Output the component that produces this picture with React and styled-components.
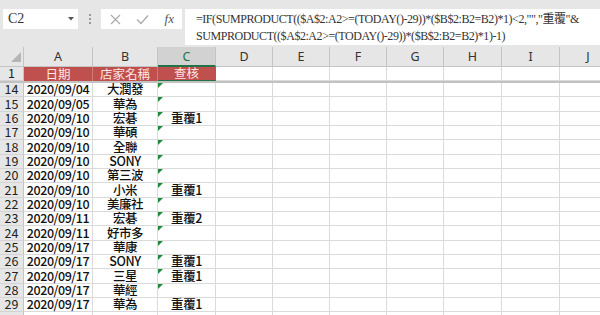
import React from "react";
import styled, { createGlobalStyle, css } from "styled-components";

const COLS = "24px 69px 65px 58px 57px 57px 57px 57px 58px 58px 57px";
const letters = ["A", "B", "C", "D", "E", "F", "G", "H", "I", "J"];

const rows = [
  [14, "2020/09/04", "大潤發", "", true],
  [15, "2020/09/05", "華為", "", true],
  [16, "2020/09/10", "宏碁", "重覆1", true],
  [17, "2020/09/10", "華碩", "", true],
  [18, "2020/09/10", "全聯", "", true],
  [19, "2020/09/10", "SONY", "", true],
  [20, "2020/09/10", "第三波", "", true],
  [21, "2020/09/10", "小米", "重覆1", true],
  [22, "2020/09/10", "美廉社", "", true],
  [23, "2020/09/11", "宏碁", "重覆2", true],
  [24, "2020/09/11", "好市多", "", true],
  [25, "2020/09/17", "華康", "", true],
  [26, "2020/09/17", "SONY", "重覆1", true],
  [27, "2020/09/17", "三星", "重覆1", true],
  [28, "2020/09/17", "華經", "", true],
  [29, "2020/09/17", "華為", "重覆1", false],
  [30, "", "", "", false],
];

function App() {
  return (
    <Page>
      <Global />
      <TopBar>
        <NameBox>
          <span>C2</span>
          <svg width="6" height="4" viewBox="0 0 6 4">
            <path d="M0 0h6L3 3.5z" fill="#555" />
          </svg>
        </NameBox>
        <Grip>
          <i />
          <i />
          <i />
        </Grip>
        <FxBox>
          <svg width="11" height="11" viewBox="0 0 11 11">
            <path d="M1 1l9 9M10 1l-9 9" stroke="#a8a8a8" strokeWidth="1.1" />
          </svg>
          <svg width="13" height="11" viewBox="0 0 13 11">
            <path d="M1 5.5l4 4L12 1.5" stroke="#a8a8a8" strokeWidth="1.2" fill="none" />
          </svg>
          <Fx>fx</Fx>
        </FxBox>
        <FormulaBar>
          =IF(SUMPRODUCT(($A$2:A2&gt;=(TODAY()-29))*($B$2:B2=B2)*1)&lt;2,"","重覆"&amp;
          <br />
          SUMPRODUCT(($A$2:A2&gt;=(TODAY()-29))*($B$2:B2=B2)*1)-1)
        </FormulaBar>
      </TopBar>

      <Sheet>
        <Row $h={20}>
          <Corner>
            <svg width="10" height="10" viewBox="0 0 10 10">
              <path d="M10 0v10H0z" fill="#b5b5b5" />
            </svg>
          </Corner>
          {letters.map((l) => (
            <ColHead key={l} $active={l === "C"}>
              {l}
            </ColHead>
          ))}
        </Row>

        <Row $h={16} $frozen>
          <RowHead>1</RowHead>
          <HeadCell>日期</HeadCell>
          <HeadCell>店家名稱</HeadCell>
          <HeadCell $active>查核</HeadCell>
          {letters.slice(3).map((l) => (
            <Cell key={l} />
          ))}
        </Row>

        {rows.map(([n, date, shop, check, flag]) => (
          <Row key={n} $h={14.33}>
            <RowHead>{n}</RowHead>
            <Cell>{date}</Cell>
            <Cell>{shop}</Cell>
            <Cell $flag={flag}>{check}</Cell>
            {letters.slice(3).map((l) => (
              <Cell key={l} />
            ))}
          </Row>
        ))}
      </Sheet>
    </Page>
  );
}

export default App;

const Global = createGlobalStyle`
  html, body {
    margin: 0;
    padding: 0;
    background: #ffffff;
    overflow: hidden;
  }
`;

const Page = styled.div`
  width: 600px;
  height: 315px;
  overflow: hidden;
  background: #ffffff;
  font-family: "Noto Sans CJK TC", "Noto Sans", sans-serif;
`;

const TopBar = styled.div`
  display: flex;
  align-items: flex-start;
  height: 47px;
  padding: 9px 0 0 3px;
  box-sizing: border-box;
  background: #e6e6e6;
`;

const NameBox = styled.div`
  display: flex;
  align-items: center;
  justify-content: space-between;
  width: 75px;
  height: 20px;
  padding: 0 4px 0 5px;
  box-sizing: border-box;
  background: #ffffff;
  font-family: "Liberation Serif", serif;
  font-size: 14px;
  color: #333;
`;

const Grip = styled.div`
  display: flex;
  flex-direction: column;
  justify-content: center;
  gap: 2px;
  width: 23px;
  height: 20px;
  align-items: center;

  i {
    display: block;
    width: 2px;
    height: 2px;
    background: #9a9a9a;
  }
`;

const FxBox = styled.div`
  display: flex;
  align-items: center;
  justify-content: space-between;
  width: 81px;
  height: 20px;
  padding: 0 8px 0 9px;
  box-sizing: border-box;
  background: #ffffff;
`;

const Fx = styled.span`
  font-family: "Liberation Serif", serif;
  font-style: italic;
  font-size: 13px;
  color: #555;
`;

const FormulaBar = styled.div`
  flex: 1;
  height: 36px;
  margin-left: 3px;
  padding: 2px 0 0 11px;
  box-sizing: border-box;
  background: #ffffff;
  font-family: "Liberation Serif", "Noto Sans CJK TC", serif;
  font-size: 12px;
  letter-spacing: -0.45px;
  line-height: 17px;
  color: #333;
  white-space: nowrap;
  overflow: hidden;
`;

const Sheet = styled.div`
  display: flex;
  flex-direction: column;
`;

const Row = styled.div`
  display: grid;
  grid-template-columns: ${COLS};
  height: ${(p) => p.$h}px;
  box-sizing: border-box;
  flex: none;
  line-height: 1;
  ${(p) =>
    p.$frozen &&
    css`
      border-bottom: 2px solid #c2c2c2;
    `}
`;

const Corner = styled.div`
  display: flex;
  align-items: flex-end;
  justify-content: flex-end;
  padding: 0 2px 4px 0;
  background: #e6e6e6;
  border-right: 1px solid #c4c4c4;
  border-bottom: 1px solid #c4c4c4;
`;

const ColHead = styled.div`
  display: flex;
  align-items: center;
  justify-content: center;
  background: ${(p) => (p.$active ? "#d2d2d2" : "#e6e6e6")};
  color: ${(p) => (p.$active ? "#217346" : "#333")};
  border-right: 1px solid #c4c4c4;
  border-bottom: ${(p) => (p.$active ? "2px solid #217346" : "1px solid #c4c4c4")};
  font-family: "Noto Sans", sans-serif;
  font-size: 12.5px;
  box-sizing: border-box;
  padding-top: 2px;
`;

const RowHead = styled.div`
  display: flex;
  align-items: center;
  justify-content: center;
  background: #e6e6e6;
  border-right: 1px solid #c4c4c4;
  border-bottom: 1px solid #d4d4d4;
  font-size: 12.5px;
  color: #222;
  box-sizing: border-box;
`;

const Cell = styled.div`
  position: relative;
  display: flex;
  align-items: center;
  justify-content: center;
  border-right: 1px solid #dadada;
  border-bottom: 1px solid #dadada;
  box-sizing: border-box;
  font-size: 12.5px;
  font-weight: 500;
  letter-spacing: -0.45px;
  color: #111;
  white-space: nowrap;

  ${(p) =>
    p.$flag &&
    css`
      &::before {
        content: "";
        position: absolute;
        left: 0;
        top: 0;
        border-top: 5px solid #1f8b3a;
        border-right: 5px solid transparent;
      }
    `}
`;

const HeadCell = styled.div`
  display: flex;
  align-items: center;
  justify-content: center;
  background: #c0504d;
  color: #fbe4e3;
  font-size: 12.5px;
  border-right: 1px solid ${(p) => (p.$active ? "#c0504d" : "#cf7b78")};
  border-bottom: ${(p) => (p.$active ? "1px solid #217346" : "none")};
  box-sizing: border-box;
`;
